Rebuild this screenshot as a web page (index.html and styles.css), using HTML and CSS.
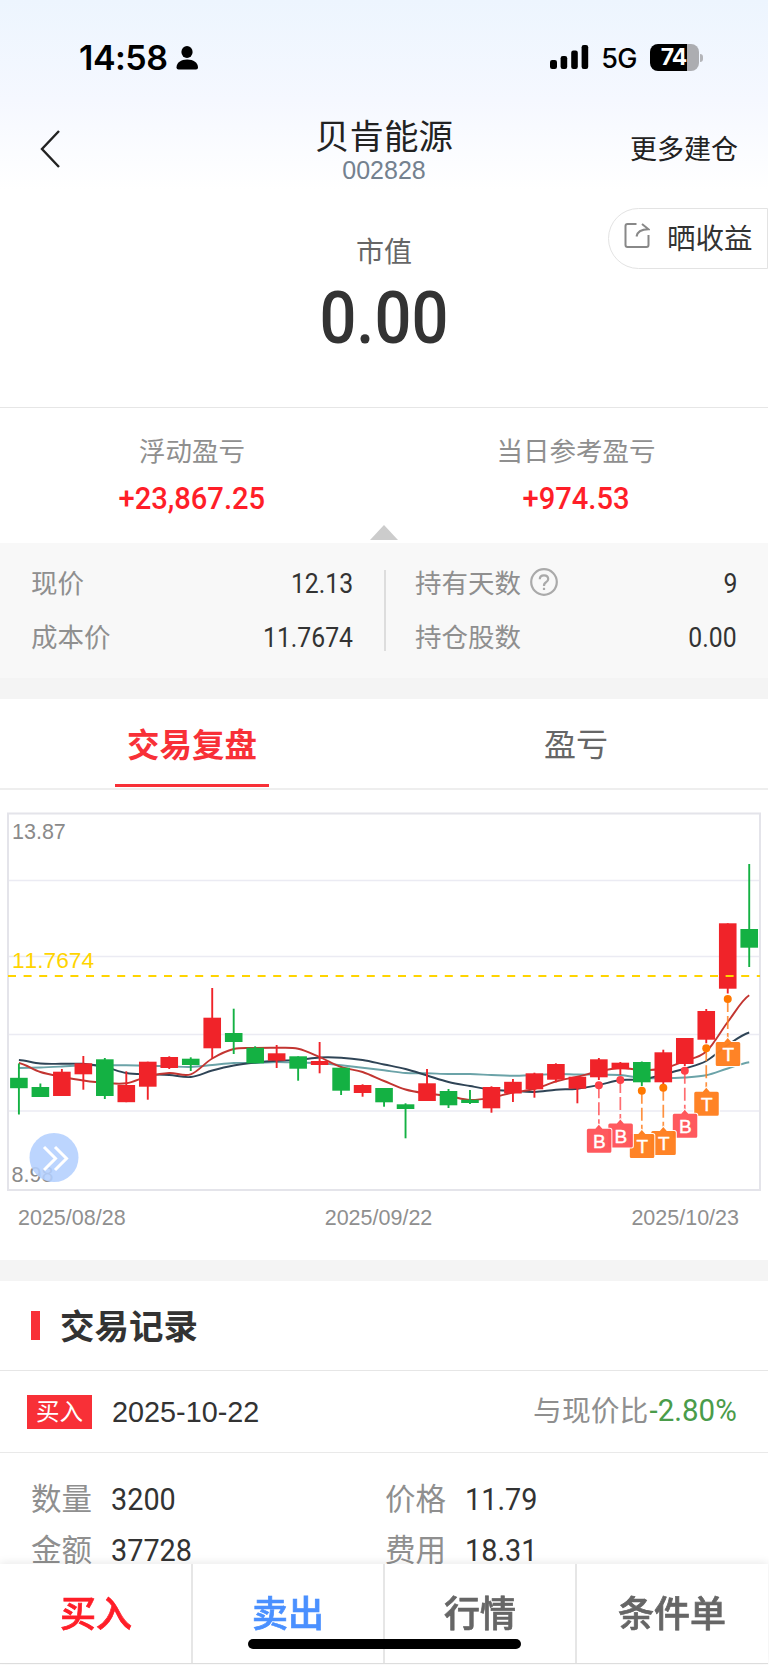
FILE: index.html
```html
<!DOCTYPE html>
<html lang="zh-CN">
<head>
  <meta charset="UTF-8" />
  <meta name="viewport" content="width=device-width, initial-scale=1.0"/>
  <title>贝肯能源 002828</title>
  <link rel="stylesheet" href="styles.css">
</head>
<body>
  <header>
    <div class="status">
      <span class="time">14:58</span>
      <svg class="person" width="23" height="24" viewBox="0 0 23 24"><ellipse cx="11" cy="6" rx="5.6" ry="6"/><path d="M0.5 21.5C0.5 16.5 5 13.5 11.2 13.5S22 16.5 22 21.5Q22 23.6 20 23.6H2.5Q0.5 23.6 0.5 21.5Z"/></svg>
      <svg class="signal" width="39" height="25" viewBox="0 0 39 25"><rect x="0" y="15" width="7" height="9" rx="2.2"/><rect x="10.6" y="11" width="6.6" height="13" rx="2.2"/><rect x="21.2" y="5.5" width="6.6" height="18.5" rx="2.2"/><rect x="31.6" y="0" width="6.6" height="24" rx="2.2"/></svg>
      <span class="net">5G</span>
      <div class="battery"><span>74</span></div>
      <i class="battery-tip"></i>
    </div>
    <nav class="navbar">
      <svg class="back" width="22" height="40" viewBox="0 0 22 40"><path d="M20 2L3 20L20 38"/></svg>
      <div class="stock">
        <h1>贝肯能源</h1>
        <p>002828</p>
      </div>
      <a class="more">更多建仓</a>
    </nav>
  </header>

  <section class="market">
    <div class="market-label">市值</div>
    <div class="market-value"><span class="num">0.00</span></div>
    <a class="share">
      <svg width="26" height="28" viewBox="0 0 26 28"><path d="M12.500 2H3.500Q1.500 2 1.500 4V23Q1.500 25 3.500 25H22.500Q24.500 25 24.500 23V13"/><path d="M12.500 14.500Q13.500 7.500 24.500 7.300L18 2"/></svg>
      <span>晒收益</span>
    </a>
  </section>

  <section class="profit">
    <div class="profit-item">
      <p>浮动盈亏</p>
      <b class="num">+23,867.25</b>
    </div>
    <div class="profit-item">
      <p>当日参考盈亏</p>
      <b class="num">+974.53</b>
    </div>
    <i class="arrow-up"></i>
  </section>

  <section class="detail">
    <div class="detail-col">
      <div class="detail-row"><label>现价</label><span class="num">12.13</span></div>
      <div class="detail-row"><label>成本价</label><span class="num">11.7674</span></div>
    </div>
    <div class="detail-col">
      <div class="detail-row"><label>持有天数</label>
        <svg class="help" width="28" height="28" viewBox="0 0 28 28"><circle cx="14" cy="14" r="12.800"/><path d="M9.800 11.200Q9.800 7.300 14 7.300T18.200 11Q18.200 13 16 14.300T14 18"/><path d="M14 19.800V22"/></svg>
        <span class="num">9</span></div>
      <div class="detail-row"><label>持仓股数</label><span class="num">0.00</span></div>
    </div>
  </section>

  <div class="gap"></div>

  <nav class="tabs">
    <div class="tab active"><span>交易复盘</span></div>
    <div class="tab"><span>盈亏</span></div>
  </nav>

  <section class="chart">
    <svg id="kline" width="768" height="392" viewBox="0 804 768 392"></svg>
    <div class="dates"><span>2025/08/28</span><span>2025/09/22</span><span>2025/10/23</span></div>
  </section>

  <div class="gap"></div>

  <section class="records">
    <h2><span>交易记录</span></h2>
    <div class="record-head">
      <span class="badge">买入</span>
      <span class="date">2025-10-22</span>
      <span class="compare">与现价比</span><span class="num down">-2.80%</span>
    </div>
    <div class="record-body">
      <div><label>数量</label><span class="num">3200</span></div>
      <div><label>价格</label><span class="num">11.79</span></div>
      <div><label>金额</label><span class="num">37728</span></div>
      <div><label>费用</label><span class="num">18.31</span></div>
    </div>
  </section>

  <footer>
    <a class="buy">买入</a>
    <a class="sell">卖出</a>
    <a>行情</a>
    <a>条件单</a>
    <i class="home"></i>
  </footer>

  <script src="chart.js"></script>
</body>
</html>
```
FILE: styles.css
```css
* {
  box-sizing: border-box;
}
body {
  margin: 0;
  width: 768px;
  height: 1665px;
  overflow: hidden;
  background: #fff;
  color: #333;
  font-family: "Noto Sans CJK SC", sans-serif;
}
h1, h2, p {
  margin: 0;
  font-weight: normal;
}
svg {
  display: block;
  flex: none;
}
.num {
  font-family: Roboto, sans-serif;
  display: inline-block;
  transform: scaleX(0.93);
}
header {
  height: 200px;
  background: linear-gradient(#edf5fe, #f5f8ff 50%, #fff 95%);
}
.status {
  height: 115px;
  padding: 0 65px 0 79px;
  display: flex;
  align-items: center;
  color: #000;
}
.time {
  font: 600 34px/40px Inter, sans-serif;
  letter-spacing: -0.5px;
  width: 97px;
}
.signal {
  margin-left: auto;
}
.net {
  font: 500 27px/40px Inter, sans-serif;
  letter-spacing: -0.5px;
  margin: 2px 13px 0 12px;
}
.battery {
  width: 49px;
  height: 27px;
  border-radius: 8px;
  background: linear-gradient(90deg, #000 37px, #acadb1 37px);
  color: #fff;
  text-align: center;
  font: 700 23px/27px Inter, sans-serif;
  letter-spacing: -1px;
  padding-right: 2px;
}
.battery-tip {
  width: 3px;
  height: 8px;
  margin-left: 1px;
  border-radius: 0 3px 3px 0;
  background: #b4b5b9;
}
.navbar {
  display: grid;
  grid-template-columns: 200px 1fr 200px;
  height: 70px;
  align-items: center;
}
.back {
  margin-left: 39px;
  margin-top: -3px;
  fill: none;
  stroke: #222;
  stroke-width: 2.4;
}
.stock {
  text-align: center;
  color: #222;
}
.stock h1 {
  font-size: 34.5px;
  line-height: 40px;
  margin-top: -4px;
}
.stock p {
  font: 25px/24px "Liberation Sans", sans-serif;
  margin-top: 4px;
  color: #74818f;
}
.more {
  color: #222;
  font-size: 27px;
  line-height: 40px;
  text-align: right;
  padding-right: 30px;
  margin-top: -4px;
}
.market {
  position: relative;
  height: 208px;
  text-align: center;
  border-bottom: 1px solid #e6e6e6;
}
.market-label {
  padding-top: 30px;
  font-size: 28px;
  line-height: 40px;
  color: #666;
}
.market-value {
  font-size: 71.5px;
  line-height: 84px;
  font-weight: 500;
}
.market-value .num {
  transform: scaleX(0.91);
}
.share {
  position: absolute;
  top: 8px;
  right: 0;
  width: 160px;
  height: 61px;
  border: 1px solid #e3e3e3;
  border-radius: 31px 0 0 31px;
  display: flex;
  align-items: center;
  font-size: 28.5px;
  line-height: 40px;
  padding-left: 15px;
}
.share svg {
  fill: none;
  stroke: #888;
  stroke-width: 2;
  margin: -5px 17px 0 0;
}
.share span {
  margin-top: -4px;
}
.profit {
  position: relative;
  height: 135px;
  display: grid;
  grid-template-columns: 1fr 1fr;
  text-align: center;
}
.profit p {
  font-size: 26.5px;
  line-height: 40px;
  padding-top: 22px;
  color: #8f8f8f;
}
.profit b {
  margin-top: 11px;
  font-size: 30.5px;
  line-height: 36px;
  font-weight: 500;
  color: #ff1e28;
  transform: scaleX(0.955);
}
.arrow-up {
  position: absolute;
  left: 370px;
  bottom: 3px;
  border: 14px solid transparent;
  border-top: 0;
  border-bottom: 15px solid #ccc;
}
.detail {
  height: 135px;
  padding-top: 13px;
  background: #f8f8f8;
  display: grid;
  grid-template-columns: 1fr 1fr;
}
.detail-col {
  padding: 0 31px;
}
.detail-col + .detail-col {
  position: relative;
}
.detail-col + .detail-col::before {
  content: "";
  position: absolute;
  left: 0;
  top: 14px;
  width: 2px;
  height: 81px;
  background: #ddd;
}
.detail-row {
  display: flex;
  align-items: center;
  height: 54px;
  font-size: 26.5px;
  line-height: 40px;
  color: #8f8f8f;
}
.detail-row label {
  margin-top: -2px;
}
.detail-row .num {
  margin-left: auto;
  font-size: 27.5px;
  color: #333;
  transform: scaleX(0.9);
  transform-origin: right;
  padding-top: 2px;
}
.help {
  margin: -2px 0 0 9px;
  fill: none;
  stroke: #aaa;
  stroke-width: 2.2;
}
.gap {
  height: 21px;
  background: #f4f4f4;
}
.tabs {
  display: grid;
  grid-template-columns: 1fr 1fr;
  height: 91px;
  border-bottom: 2px solid #eee;
}
.tab {
  display: flex;
  justify-content: center;
  align-items: flex-start;
  font-size: 32px;
  color: #666;
}
.tab span {
  width: 154px;
  height: 88px;
  text-align: center;
  line-height: 87px;
}
.tab.active {
  font-size: 32.5px;
  font-weight: bold;
  color: #f83037;
}
.tab.active span {
  border-bottom: 3px solid #f83037;
}
.chart {
  height: 470px;
  padding-top: 14px;
}
#kline {
  font-family: "Liberation Sans", sans-serif;
  font-kerning: none;
}
.dates {
  display: flex;
  justify-content: space-between;
  padding: 0 29px 0 18px;
  margin-top: 7px;
  font: 21.5px/30px "Liberation Sans", sans-serif;
  color: #8f8f8f;
}
.records h2 {
  height: 90px;
  display: flex;
  align-items: center;
  border-bottom: 1px solid #e6e6e6;
  font-size: 34.5px;
  line-height: 40px;
  font-weight: bold;
}
.records h2 span {
  margin-top: -4px;
}
.records h2::before {
  content: "";
  width: 9px;
  height: 29px;
  margin: 0 20px 0 31px;
  background: #f83037;
}
.record-head {
  height: 82px;
  padding: 0 31px 0 27px;
  display: flex;
  align-items: center;
  border-bottom: 1px solid #e9e9e9;
}
.badge {
  width: 65px;
  height: 34px;
  text-align: center;
  background: #f83037;
  color: #fff;
  font-size: 23.5px;
  line-height: 31px;
}
.date {
  font: 28.8px/40px "Liberation Sans", sans-serif;
  margin-left: 20px;
}
.compare {
  margin: -5px 0 0 auto;
  font-size: 28.8px;
  line-height: 40px;
  color: #8f8f8f;
}
.down {
  font-size: 31px;
  color: #4a9c4a;
  transform: scaleX(0.95);
  transform-origin: right;
  margin: -2px 0 0 -3px;
}
.record-body {
  padding: 20px 0 0 31px;
  display: grid;
  grid-template-columns: 354px 1fr;
  grid-auto-rows: 51px;
}
.record-body > div {
  display: flex;
  align-items: center;
  font-size: 30.5px;
  line-height: 40px;
}
.record-body label {
  color: #8f8f8f;
  width: 80px;
  margin-top: -4px;
}
.record-body .num {
  font-size: 31px;
  transform-origin: left;
  padding-top: 2px;
}
footer {
  position: fixed;
  left: 0;
  bottom: 1px;
  width: 768px;
  height: 100px;
  display: grid;
  grid-template-columns: repeat(4, 1fr);
  background: #fff;
  border-bottom: 1px solid #ddd;
  box-shadow: 0 -2px 8px rgba(0,0,0,0.08);
}
footer a {
  text-align: center;
  font-size: 36px;
  line-height: 95px;
  font-weight: 500;
  color: #666;
  -webkit-text-stroke: 0.7px;
}
footer a + a {
  box-shadow: -1px 0 #e6e6e6, inset 1px 0 #e6e6e6;
}
footer .buy {
  color: #ff1e28;
}
footer .sell {
  color: #4a90ff;
}
.home {
  position: absolute;
  left: 248px;
  bottom: 14px;
  width: 273px;
  height: 10px;
  border-radius: 5px;
  background: #000;
}
```
FILE: chart.js
```js
// [up, high, body top, body bottom, low]
const candles = [
  [0, 1063.5, 1077.8, 1088.2, 1114.5],
  [0, 1083.5, 1087, 1097, 1097],
  [1, 1069, 1071.7, 1096, 1096],
  [1, 1056, 1063.3, 1074.3, 1089.7],
  [0, 1058, 1059.3, 1096, 1099],
  [1, 1071.3, 1085, 1102.2, 1102.2],
  [1, 1061.7, 1061.7, 1086.7, 1099.7],
  [1, 1056.3, 1057, 1068, 1069],
  [0, 1057.3, 1058.7, 1065, 1071],
  [1, 988, 1017.7, 1048.3, 1058],
  [0, 1008.7, 1033, 1042, 1054],
  [0, 1046.3, 1047.7, 1063.3, 1063.3],
  [1, 1045, 1053.3, 1060.7, 1068],
  [0, 1056.3, 1056.3, 1068.7, 1080.7],
  [1, 1042, 1061, 1065, 1073.3],
  [0, 1067.7, 1067.7, 1090.7, 1095],
  [1, 1084.3, 1085, 1093, 1096.7],
  [0, 1088, 1088, 1102.3, 1106.7],
  [0, 1103.3, 1104.3, 1109, 1138.3],
  [1, 1069, 1083.3, 1101, 1101],
  [0, 1089, 1091, 1105.3, 1108],
  [0, 1090, 1099.7, 1103, 1104],
  [1, 1086.3, 1087, 1108.3, 1112.7],
  [1, 1079, 1081.8, 1093.5, 1102],
  [1, 1072.7, 1073.3, 1089.3, 1097.7],
  [1, 1063.3, 1064, 1079.7, 1082.3],
  [1, 1076.7, 1076.7, 1088.7, 1103.3],
  [1, 1058, 1059.3, 1077.3, 1080],
  [1, 1062, 1062.7, 1069.3, 1075],
  [0, 1061.5, 1062, 1082.3, 1086],
  [1, 1049.7, 1052.3, 1082.3, 1084],
  [1, 1038, 1038, 1064, 1066],
  [1, 1009, 1011, 1039.7, 1043.3],
  [1, 923.3, 923.3, 988.7, 993.5],
  [0, 864, 929, 947.7, 967]
];

const averages = [
  ["#6ba3a8", [1068, 1067.5, 1066.5, 1065.3, 1065.3, 1065.3, 1065.7, 1066.3, 1067, 1065, 1063, 1063, 1062, 1062.7, 1063, 1065.3, 1067.7, 1070.3, 1073, 1073.3, 1074, 1074, 1075, 1075.8, 1075, 1074, 1074.5, 1074.7, 1075, 1078, 1078.3, 1077.5, 1075.3, 1068.5, 1062.3]],
  ["#2f4456", [1060, 1063.5, 1063.8, 1063.8, 1067, 1073, 1074.3, 1075, 1077, 1070.5, 1065.5, 1062.5, 1060.7, 1060, 1057.5, 1057.7, 1060, 1064.5, 1069, 1075.5, 1082, 1086, 1089.5, 1091, 1092, 1089.7, 1088.7, 1085, 1080, 1079.5, 1074.5, 1068.5, 1061, 1045, 1032.5]],
  ["#c23531", [1063, 1072, 1076.7, 1080.5, 1083, 1083.3, 1076.5, 1073, 1074.3, 1058.5, 1049, 1048, 1047.8, 1048.7, 1057, 1067, 1072, 1081, 1089.5, 1093.5, 1096, 1100, 1097.7, 1092.5, 1089, 1081.5, 1076.7, 1071.5, 1068, 1070, 1068.5, 1061, 1051.5, 1022, 995.3]]
];

// [candle index, type, dot y, box top]
const trades = [
  [27, "B", 1085.3, 1128.7],
  [28, "B", 1080, 1123.5],
  [29, "T", 1090.7, 1134],
  [30, "T", 1087.7, 1131],
  [31, "B", 1070.7, 1113.7],
  [32, "T", 1048.3, 1091.7],
  [33, "T", 999, 1042]
];

const xAt = i => 18.9 + i * 21.48;

function smooth(ys) {
  const at = i => ys[Math.max(0, Math.min(ys.length - 1, i))];
  const step = 21.48 / 3;
  let d = `M${xAt(0)} ${ys[0]}`;
  for (let i = 0; i < ys.length - 1; i++) {
    const c1 = at(i) + (at(i + 1) - at(i - 1)) / 6;
    const c2 = at(i + 1) - (at(i + 2) - at(i)) / 6;
    d += `C${xAt(i) + step} ${c1} ${xAt(i + 1) - step} ${c2} ${xAt(i + 1)} ${at(i + 1)}`;
  }
  return d;
}

let out = "";
[880.5, 956.5, 1034.5, 1111].forEach(y => {
  out += `<path d="M8 ${y}H760" stroke="#ebebf3" stroke-width="1.3"/>`;
});
out += `<rect x="8" y="813.5" width="752" height="376.5" fill="none" stroke="#e4e4ea" stroke-width="2"/>`;

averages.forEach(([color, ys]) => {
  out += `<path d="${smooth(ys)}" fill="none" stroke="${color}" stroke-width="1.9"/>`;
});

candles.forEach(([up, high, top, bottom, low], i) => {
  const color = up ? "#f02329" : "#14b143";
  out += `<path d="M${xAt(i)} ${high}V${low}" stroke="${color}" stroke-width="1.9"/>`;
  out += `<rect x="${xAt(i) - 8.8}" y="${top}" width="17.6" height="${bottom - top}" fill="${color}"/>`;
});

out += `<path d="M8 976H760" stroke="#ffd400" stroke-width="2" stroke-dasharray="8 7.6"/>`;
out += `<g fill="#8a8a8a" font-size="21.5"><text x="12" y="839">13.87</text><text x="11.5" y="1182">8.98</text></g>`;
out += `<text x="12" y="967.5" fill="#ffd400" font-size="22.7">11.7674</text>`;

// drawn right to left so the earlier trade stays on top
trades.slice().reverse().forEach(([i, type, dot, top]) => {
  const x = xAt(i);
  const color = type === "B" ? "#ff5459" : "#ff8020";
  const dotColor = type === "B" ? "#ff4048" : "#ff7800";
  out += `<path d="M${x} ${dot}V${top}" stroke="${color}" stroke-width="1.7" stroke-dasharray="13 4" opacity="0.85"/>`;
  out += `<circle cx="${x}" cy="${dot}" r="4" fill="${dotColor}"/>`;
  out += `<path d="M${x - 10.5} ${top}h7l3.500 -4l3.500 4h7.500q1.500 0 1.500 1.500v21q0 1.500 -1.500 1.500h-21.500q-1.500 0 -1.500 -1.500v-21q0 -1.500 1.500 -1.500z" fill="${color}" stroke="#fff" stroke-width="2" paint-order="stroke" opacity="0.97"/>`;
  out += `<text x="${x + 0.6}" y="${top + 19}" font-size="19" fill="#fff" stroke="#fff" stroke-width="0.4" text-anchor="middle">${type}</text>`;
});

// scroll button
out += `<circle cx="54" cy="1157.5" r="24.5" fill="#b3cffe" opacity="0.88"/>`;
out += `<path d="M44 1147L55.500 1158.500L44 1170M55 1147L66.500 1158.500L55 1170" fill="none" stroke="#fff" stroke-width="3"/>`;

document.getElementById("kline").innerHTML = out;
```
